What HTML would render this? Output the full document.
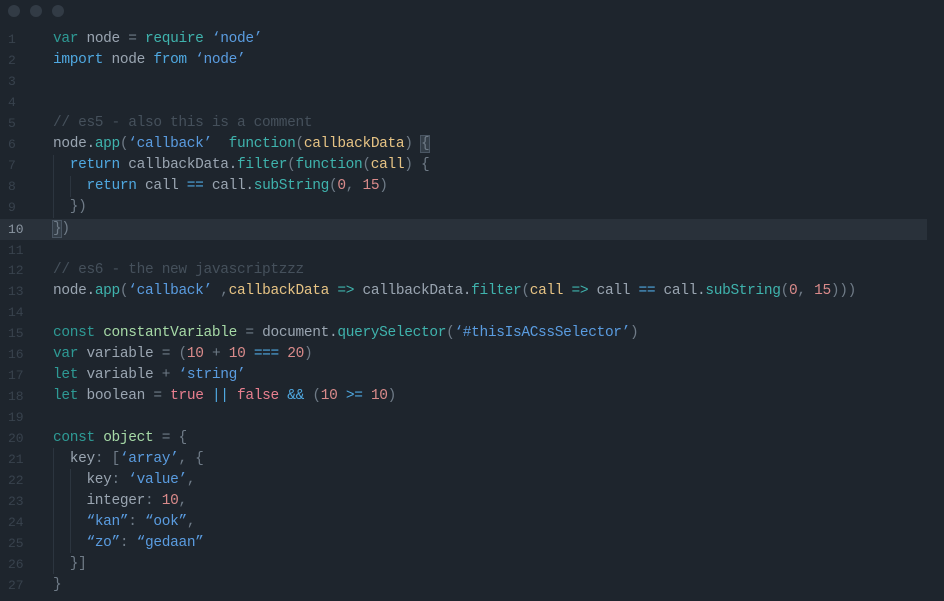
<!DOCTYPE html><html><head><style>
body{margin:0;background:#1e252d;width:944px;height:601px;overflow:hidden;font-family:"Liberation Mono",monospace;font-size:14.5px}
.dots span{position:absolute;top:5px;width:12px;height:12px;border-radius:50%;background:#323b45}
.l{position:absolute;left:0;height:21px;line-height:21px;white-space:pre;color:#9aa5b1;width:927px}
.n{position:absolute;left:8px;color:#38424d;font-size:13px}
.c{position:absolute;left:53px;letter-spacing:-0.34px}
.hl{background:#29313a}.hl .n{color:#8a95a1}
.k{color:#2e9a95}.f{color:#3fb3ad}.s{color:#5a9ce0}.r{color:#4fa8e0}.p{color:#6f7b87}.a{color:#e6c384}.d{color:#d98a8a}.b{color:#e87f8f}.g{color:#a6d9a6}.m{color:#45505b}
.g1{position:absolute;width:1px;background:#2c353f}
.br{outline:1px solid #4a5663;background:#343e48}
</style></head><body>
<div class="dots"><span style="left:8px"></span><span style="left:30px"></span><span style="left:52px"></span></div>
<div class="g1" style="left:53px;top:155px;height:63px"></div>
<div class="g1" style="left:70px;top:176px;height:21px"></div>
<div class="g1" style="left:53px;top:448px;height:126px"></div>
<div class="g1" style="left:70px;top:469px;height:84px"></div>
<div class="l" style="top:29px"><span class="n">1</span><span class="c"><span class="k">var</span> node <span class="p">=</span> <span class="f">require</span> <span class="s">‘node’</span></span></div>
<div class="l" style="top:50px"><span class="n">2</span><span class="c"><span class="r">import</span> node <span class="r">from</span> <span class="s">‘node’</span></span></div>
<div class="l" style="top:71px"><span class="n">3</span></div>
<div class="l" style="top:92px"><span class="n">4</span></div>
<div class="l" style="top:113px"><span class="n">5</span><span class="c m">// es5 - also this is a comment</span></div>
<div class="l" style="top:134px"><span class="n">6</span><span class="c">node.<span class="f">app</span><span class="p">(</span><span class="s">‘callback’</span>  <span class="f">function</span><span class="p">(</span><span class="a">callbackData</span><span class="p">)</span> <span class="p br">{</span></span></div>
<div class="l" style="top:155px"><span class="n">7</span><span class="c">  <span class="r">return</span> callbackData.<span class="f">filter</span><span class="p">(</span><span class="f">function</span><span class="p">(</span><span class="a">call</span><span class="p">) {</span></span></div>
<div class="l" style="top:176px"><span class="n">8</span><span class="c">    <span class="r">return</span> call <span class="r">==</span> call.<span class="f">subString</span><span class="p">(</span><span class="d">0</span><span class="p">,</span> <span class="d">15</span><span class="p">)</span></span></div>
<div class="l" style="top:197px"><span class="n">9</span><span class="c p">  })</span></div>
<div class="l hl" style="top:219px"><span class="n">10</span><span class="c p"><span class="br">}</span>)</span></div>
<div class="l" style="top:260px"><span class="n">12</span><span class="c m">// es6 - the new javascriptzzz</span></div>
<div class="l" style="top:240px"><span class="n">11</span></div>
<div class="l" style="top:281px"><span class="n">13</span><span class="c">node.<span class="f">app</span><span class="p">(</span><span class="s">‘callback’</span> <span class="p">,</span><span class="a">callbackData</span> <span class="f">=&gt;</span> callbackData.<span class="f">filter</span><span class="p">(</span><span class="a">call</span> <span class="f">=&gt;</span> call <span class="r">==</span> call.<span class="f">subString</span><span class="p">(</span><span class="d">0</span><span class="p">,</span> <span class="d">15</span><span class="p">)))</span></span></div>
<div class="l" style="top:302px"><span class="n">14</span></div>
<div class="l" style="top:323px"><span class="n">15</span><span class="c"><span class="k">const</span> <span class="g">constantVariable</span> <span class="p">=</span> document.<span class="f">querySelector</span><span class="p">(</span><span class="s">‘#thisIsACssSelector’</span><span class="p">)</span></span></div>
<div class="l" style="top:344px"><span class="n">16</span><span class="c"><span class="k">var</span> variable <span class="p">=</span> <span class="p">(</span><span class="d">10</span> <span class="p">+</span> <span class="d">10</span> <span class="r">===</span> <span class="d">20</span><span class="p">)</span></span></div>
<div class="l" style="top:365px"><span class="n">17</span><span class="c"><span class="k">let</span> variable <span class="p">+</span> <span class="s">‘string’</span></span></div>
<div class="l" style="top:386px"><span class="n">18</span><span class="c"><span class="k">let</span> boolean <span class="p">=</span> <span class="b">true</span> <span class="r">||</span> <span class="b">false</span> <span class="r">&amp;&amp;</span> <span class="p">(</span><span class="d">10</span> <span class="r">&gt;=</span> <span class="d">10</span><span class="p">)</span></span></div>
<div class="l" style="top:407px"><span class="n">19</span></div>
<div class="l" style="top:428px"><span class="n">20</span><span class="c"><span class="k">const</span> <span class="g">object</span> <span class="p">= {</span></span></div>
<div class="l" style="top:449px"><span class="n">21</span><span class="c">  key<span class="p">: [</span><span class="s">‘array’</span><span class="p">, {</span></span></div>
<div class="l" style="top:470px"><span class="n">22</span><span class="c">    key<span class="p">:</span> <span class="s">‘value’</span><span class="p">,</span></span></div>
<div class="l" style="top:491px"><span class="n">23</span><span class="c">    integer<span class="p">:</span> <span class="d">10</span><span class="p">,</span></span></div>
<div class="l" style="top:512px"><span class="n">24</span><span class="c">    <span class="s">“kan”</span><span class="p">:</span> <span class="s">“ook”</span><span class="p">,</span></span></div>
<div class="l" style="top:533px"><span class="n">25</span><span class="c">    <span class="s">“zo”</span><span class="p">:</span> <span class="s">“gedaan”</span></span></div>
<div class="l" style="top:554px"><span class="n">26</span><span class="c p">  }]</span></div>
<div class="l" style="top:575px"><span class="n">27</span><span class="c p">}</span></div>
</body></html>
